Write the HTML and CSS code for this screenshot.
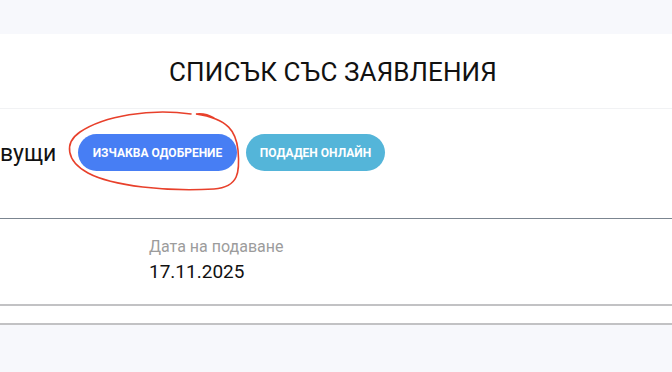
FILE: index.html
```html
<!DOCTYPE html>
<html lang="bg">
<head>
<meta charset="utf-8">
<link rel="stylesheet" href="styles.css">
</head>
<body>
<div class="page">
  <section class="panel">
    <header class="panel-head">
      <h1 class="title">СПИСЪК СЪС ЗАЯВЛЕНИЯ</h1>
    </header>
    <div class="filters">
      <span class="filter-label">вущи</span>
      <div class="chips">
        <button class="chip chip-blue">ИЗЧАКВА ОДОБРЕНИЕ</button>
        <button class="chip chip-teal">ПОДАДЕН ОНЛАЙН</button>
      </div>
      <svg class="scribble" width="190" height="90" viewBox="60 105 190 90" aria-hidden="true">
        <path d="M191 114 C150 108 104 116 80 132 C64 143 66 161 88 173 C112 186 168 192 214 189 C239 187 240 172 238 150 C236 132 229 119 196 114 C203 113 209 115 214 118" fill="none" stroke="#e8402b" stroke-width="1.6" stroke-linecap="round"/>
      </svg>
    </div>
    <div class="list">
      <div class="item">
        <div class="field">
          <div class="field-label">Дата на подаване</div>
          <div class="field-value">17.11.2025</div>
        </div>
      </div>
      <div class="item-gap"></div>
    </div>
  </section>
</div>
</body>
</html>
```
FILE: styles.css
```css
html, body {
  margin: 0;
  padding: 0;
}
body {
  background: #f7f8fc;
  font-family: Roboto, "Noto Sans", "Liberation Sans", sans-serif;
  color: #111;
  width: 672px;
  height: 372px;
  overflow: hidden;
}
.page {
  padding-top: 34px;
}
.panel {
  background: #fff;
}
.panel-head {
  height: 75px;
  border-bottom: 1px solid #f1f2f4;
  display: flex;
  align-items: center;
  justify-content: center;
  padding-right: 6px;
  box-sizing: border-box;
}
.title {
  margin: 0;
  font-size: 26px;
  font-weight: 400;
  letter-spacing: 0.1px;
  color: #111;
  padding-top: 2px;
}
.filters {
  position: relative;
  height: 109px;
  display: flex;
  align-items: flex-start;
  padding-top: 25px;
  box-sizing: border-box;
}
.filter-label {
  font-size: 23px;
  line-height: 40px;
  color: #111;
  width: 78px;
}
.chips {
  display: flex;
  gap: 9px;
}
.chip {
  border: none;
  border-radius: 19px;
  height: 37px;
  padding: 0 10px;
  color: #fff;
  font-family: Roboto, "Liberation Sans", sans-serif;
  font-size: 12px;
  font-weight: 700;
  letter-spacing: 0;
}
.chip-blue {
  background: #477ef4;
  width: 159px;
}
.chip-teal {
  background: #54b5d9;
  width: 139px;
}
.scribble {
  position: absolute;
  left: 60px;
  top: -4px;
}
.list {
  border-top: 1px solid #7b8590;
}
.item {
  height: 87px;
  border-bottom: 2px solid #c2c2c4;
  padding-left: 149px;
  padding-top: 18px;
  box-sizing: border-box;
}
.field-label {
  font-size: 16px;
  color: #9c9c9c;
  line-height: 20px;
}
.field-value {
  font-size: 19px;
  color: #111;
  line-height: 26px;
  margin-top: 2px;
}
.item-gap {
  height: 17px;
  border-bottom: 2px solid #c2c2c4;
}
```
